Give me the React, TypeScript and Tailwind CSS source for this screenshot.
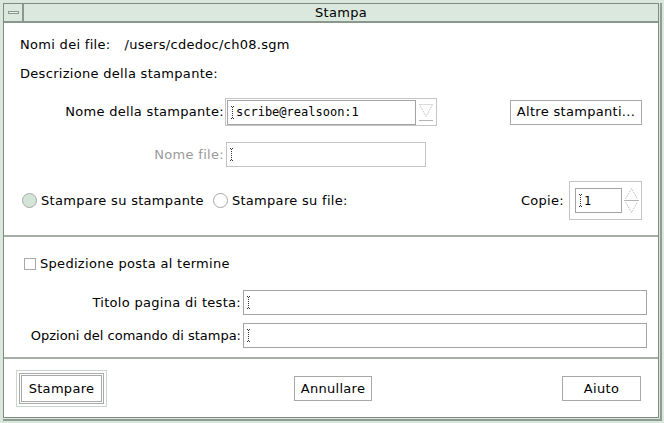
const font = { fontFamily: '"DejaVu Sans", "Liberation Sans", sans-serif' };
const mono = { fontFamily: '"DejaVu Sans Mono", "Liberation Mono", monospace' };

// cursore di testo puntinato all'inizio dei campi
const Cursor = () => (
  <svg width="4" height="13" viewBox="0 0 4 13" className="shrink-0">
    <g fill="#333">
      <rect x="0" y="0" width="1" height="1" />
      <rect x="2" y="0" width="1" height="1" />
      <rect x="1" y="1" width="1" height="1" />
      <rect x="1" y="3" width="1" height="1" />
      <rect x="1" y="5" width="1" height="1" />
      <rect x="1" y="7" width="1" height="1" />
      <rect x="1" y="9" width="1" height="1" />
      <rect x="1" y="11" width="1" height="1" />
      <rect x="0" y="12" width="1" height="1" />
      <rect x="2" y="12" width="1" height="1" />
    </g>
  </svg>
);

const Field = ({ w, value }: { w: string; value?: string }) => (
  <div className={`${w} h-[25px] border border-[#a4a4a4] bg-white flex items-center pl-[3px] gap-[1px]`}>
    <Cursor />
    {value && (
      <span className="text-[12px] text-black tracking-normal" style={mono}>
        {value}
      </span>
    )}
  </div>
);

const Button = ({ label, w }: { label: string; w: string }) => (
  <div className={`${w} h-[25px] border border-[#a8a8a8] bg-white flex items-center justify-center text-[13px] text-black`}>
    {label}
  </div>
);

export default function App() {
  return (
    <div className="w-[664px] h-[423px] bg-[#d9e7dc] pt-[3px] pl-[3px] pr-[2px] pb-[2px]" style={font}>
      <div className="w-full h-full border-r-2 border-b-2 border-[#8e9c91] pr-[1px] pb-[1px]">
        <div className="w-full h-full border border-[#7d8b80] flex flex-col">
          {/* barra del titolo */}
          <div className="h-[19px] bg-[#dae8dd] border-b-2 border-[#8a978d] flex shrink-0">
            <div className="w-[20px] border-r-2 border-[#8a978d] flex items-center justify-center">
              <div className="w-[11px] h-[3px] border border-[#8a978d] bg-[#e8f1ea]" />
            </div>
            <div className="flex-1 flex items-center justify-center text-[13px] text-black tracking-[0.3px]">Stampa</div>
          </div>

          <div className="flex-1 bg-white flex flex-col text-[13px] text-black tracking-[0.3px]">
            {/* sezione stampante */}
            <div className="h-[214px] border-b-2 border-[#a6aea8] pl-[16px] pt-[12px]">
              <div className="h-[20px] flex items-center gap-[14px]">
                <span>Nomi dei file:</span>
                <span>/users/cdedoc/ch08.sgm</span>
              </div>
              <div className="h-[20px] mt-[9px] flex items-center">Descrizione della stampante:</div>

              <div className="h-[28px] mt-[14px] flex items-center -ml-[16px]">
                <div className="w-[220px] text-right">Nome della stampante:</div>
                <div className="ml-[1px] w-[212px] h-[28px] border border-[#c4c4c4] flex items-center px-[1px] gap-[2px]">
                  <Field w="w-[189px]" value="scribe@realsoon:1" />
                  <svg width="16" height="22" viewBox="0 0 16 22">
                    <path d="M1.5 3.5 L14.5 3.5 L8 15.5 Z" fill="none" stroke="#b4b4b4" strokeDasharray="1 1" />
                    <path d="M1 19.5 L15 19.5" stroke="#b4b4b4" />
                  </svg>
                </div>
                <div className="ml-[73px]">
                  <Button label="Altre stampanti..." w="w-[132px]" />
                </div>
              </div>

              <div className="h-[25px] mt-[16px] flex items-center -ml-[16px]">
                <div className="w-[220px] text-right text-[#9a9a9a]">Nome file:</div>
                <div className="ml-[2px] w-[200px] h-[25px] border border-[#c4c4c4] flex items-center pl-[3px]">
                  <Cursor />
                </div>
              </div>

              <div className="h-[39px] mt-[14px] flex items-center -ml-[16px]">
                <div className="ml-[18px] w-[15px] h-[15px] rounded-full border border-[#a8a8a8] bg-[#d3e5d7]" />
                <span className="ml-[4px]">Stampare su stampante</span>
                <div className="ml-[9px] w-[15px] h-[15px] rounded-full border border-[#a8a8a8] bg-white" />
                <span className="ml-[4px]">Stampare su file:</span>
                <span className="ml-auto">Copie:</span>
                <div className="ml-[5px] mr-[16px] w-[73px] h-[39px] border border-[#c4c4c4] flex items-center pl-[5px] gap-[1px]">
                  <Field w="w-[47px]" value="1" />
                  <svg width="17" height="27" viewBox="0 0 17 27">
                    <path d="M2.5 12 L8.5 1.5 L14.5 12" fill="none" stroke="#b4b4b4" strokeDasharray="1 1" />
                    <path d="M1 13.5 L16 13.5" stroke="#b4b4b4" />
                    <path d="M2.5 15 L8.5 25.5 L14.5 15" fill="none" stroke="#b4b4b4" strokeDasharray="1 1" />
                  </svg>
                </div>
              </div>
            </div>

            {/* sezione opzioni */}
            <div className="h-[122px] border-b-2 border-[#a6aea8] pt-[17px]">
              <div className="h-[20px] flex items-center">
                <div className="ml-[20px] w-[12px] h-[12px] border border-[#a8a8a8] bg-white" />
                <span className="ml-[4px]">Spedizione posta al termine</span>
              </div>
              <div className="h-[25px] mt-[16px] flex items-center">
                <div className="w-[237px] text-right">Titolo pagina di testa:</div>
                <div className="ml-[2px]">
                  <Field w="w-[404px]" />
                </div>
              </div>
              <div className="h-[25px] mt-[8px] flex items-center">
                <div className="w-[237px] text-right tracking-normal">Opzioni del comando di stampa:</div>
                <div className="ml-[2px]">
                  <Field w="w-[404px]" />
                </div>
              </div>
            </div>

            {/* pulsanti */}
            <div className="flex-1 flex items-center px-[12px] pt-[1px]">
              <div className="w-[91px] h-[37px] border border-[#c8d6cb] flex items-center justify-center">
                <div className="w-[85px] h-[31px] border border-[#a8a8a8] flex items-center justify-center">
                  <div className="w-[81px] h-[27px] border border-[#a8a8a8] flex items-center justify-center">
                    Stampare
                  </div>
                </div>
              </div>
              <div className="ml-[187px]">
                <Button label="Annullare" w="w-[78px]" />
              </div>
              <div className="ml-auto mr-[5px]">
                <Button label="Aiuto" w="w-[79px]" />
              </div>
            </div>
          </div>
        </div>
      </div>
    </div>
  );
}
